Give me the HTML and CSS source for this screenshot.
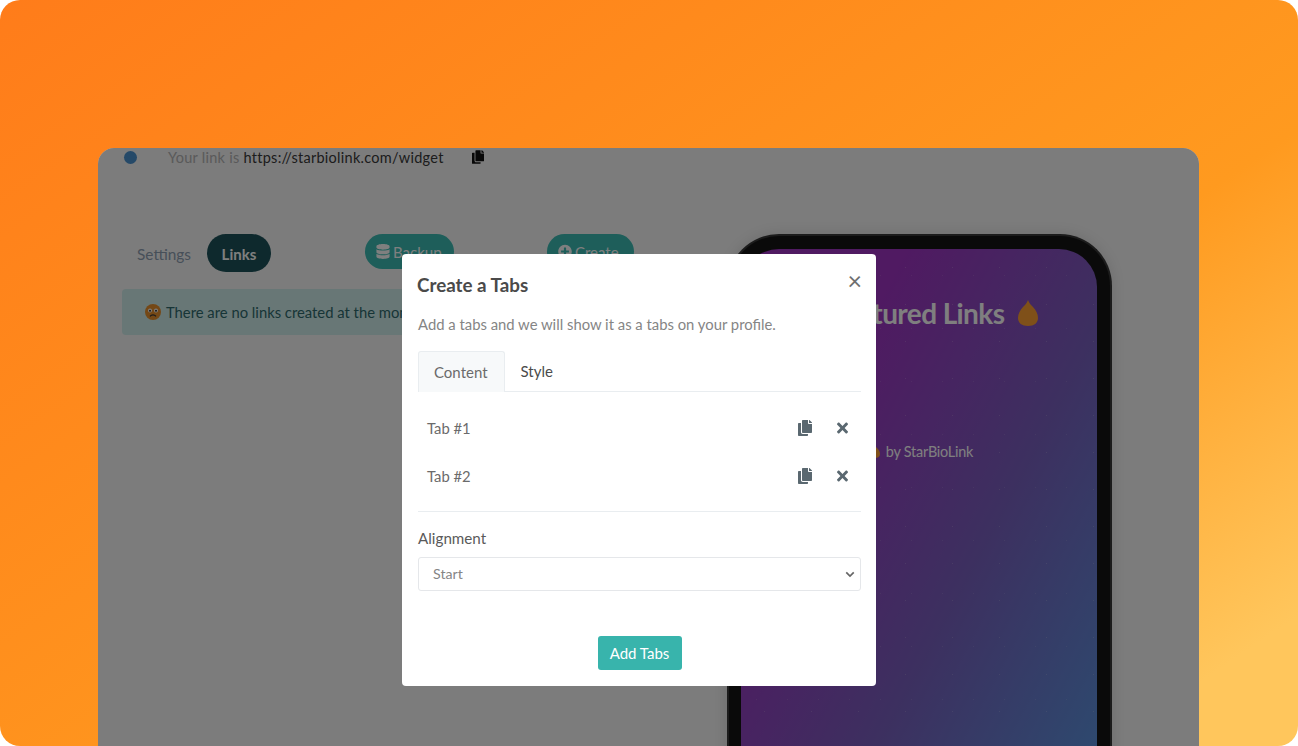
FILE: index.html
```html
<!DOCTYPE html>
<html lang="en">
<head>
    <meta charset="UTF-8">
    <meta name="viewport" content="width=device-width, initial-scale=1.0">
    <title>Create a Tabs</title>
    <link rel="stylesheet" href="styles.css">
</head>
<body>
    <div class="hero">
        <div class="app">
            <div class="link-bar">
                <span class="status-dot"></span>
                <span class="link-text">Your link is <span class="link-url">https://starbiolink.com/widget</span></span>
                <svg class="link-copy" viewBox="0 0 448 512"><path d="M320 448v40c0 13.255-10.745 24-24 24H24c-13.255 0-24-10.745-24-24V120c0-13.255 10.745-24 24-24h72v296c0 30.879 25.121 56 56 56h168zm0-344V0H152c-13.255 0-24 10.745-24 24v368c0 13.255 10.745 24 24 24h272c13.255 0 24-10.745 24-24V128H344c-13.2 0-24-10.8-24-24zm120.971-31.029L375.029 7.029A24 24 0 0 0 358.059 0H352v96h96v-6.059a24 24 0 0 0-7.029-16.97z"/></svg>
            </div>

            <div class="workspace">
                <div class="main-col">
                    <div class="toolbar">
                        <span class="nav-link">Settings</span>
                        <span class="nav-link nav-active">Links</span>
                        <span class="pill pill-backup">
                            <svg class="pill-icon" viewBox="0 0 448 512"><path d="M448 73.143v45.714C448 159.143 347.667 192 224 192S0 159.143 0 118.857V73.143C0 32.857 100.333 0 224 0s224 32.857 224 73.143zM448 176v102.857C448 319.143 347.667 352 224 352S0 319.143 0 278.857V176c48.125 33.143 136.208 48.572 224 48.572S399.874 209.143 448 176zm0 160v102.857C448 479.143 347.667 512 224 512S0 479.143 0 438.857V336c48.125 33.143 136.208 48.572 224 48.572S399.874 369.143 448 336z"/></svg>
                            Backup
                        </span>
                        <span class="pill pill-create">
                            <svg class="pill-icon" viewBox="0 0 512 512"><path d="M256 8C119 8 8 119 8 256s111 248 248 248 248-111 248-248S393 8 256 8zm144 276c0 6.6-5.4 12-12 12h-92v92c0 6.6-5.4 12-12 12h-56c-6.6 0-12-5.4-12-12v-92h-92c-6.6 0-12-5.4-12-12v-56c0-6.6 5.4-12 12-12h92v-92c0-6.6 5.4-12 12-12h56c6.6 0 12 5.4 12 12v92h92c6.6 0 12 5.4 12 12v56z"/></svg>
                            Create
                        </span>
                    </div>
                    <div class="notice">
                        <svg class="notice-face" viewBox="0 0 16 16">
                            <circle cx="8" cy="8" r="8" fill="#e8902c"/>
                            <circle cx="5" cy="6.6" r="2" fill="#fff"/>
                            <circle cx="11" cy="6.6" r="2" fill="#fff"/>
                            <circle cx="5" cy="6.8" r="1" fill="#333"/>
                            <circle cx="11" cy="6.8" r="1" fill="#333"/>
                            <path d="M5 12.4c1.6-2 4.4-2 6 0" fill="none" stroke="#333" stroke-width="1.2"/>
                        </svg>
                        There are no links created at the moment.
                    </div>
                </div>

                <div class="phone">
                    <div class="phone-screen">
                        <div class="phone-title">
                            <span>Featured Links</span>
                            <svg class="flame" viewBox="0 0 20 26"><path d="M10 0c1 3 3 5 5 7 3 3 5 7 5 11 0 5-4 8-10 8S0 23 0 18c0-4 2-8 5-11 2-2 4-4 5-7z"/></svg>
                        </div>
                        <div class="phone-credit">
                            <svg class="flame-small" viewBox="0 0 20 26"><path d="M10 0c1 3 3 5 5 7 3 3 5 7 5 11 0 5-4 8-10 8S0 23 0 18c0-4 2-8 5-11 2-2 4-4 5-7z"/></svg>
                            by StarBioLink
                        </div>
                    </div>
                </div>
            </div>

            <div class="backdrop">
                <div class="modal">
                    <div class="modal-head">
                        <h1>Create a Tabs</h1>
                        <span class="modal-close">&times;</span>
                    </div>
                    <p class="modal-desc">Add a tabs and we will show it as a tabs on your profile.</p>

                    <div class="tabs">
                        <span class="tab tab-active">Content</span>
                        <span class="tab">Style</span>
                    </div>

                    <div class="tab-row">
                        <span class="tab-name">Tab #1</span>
                        <svg class="row-icon row-copy" viewBox="0 0 448 512"><path d="M320 448v40c0 13.255-10.745 24-24 24H24c-13.255 0-24-10.745-24-24V120c0-13.255 10.745-24 24-24h72v296c0 30.879 25.121 56 56 56h168zm0-344V0H152c-13.255 0-24 10.745-24 24v368c0 13.255 10.745 24 24 24h272c13.255 0 24-10.745 24-24V128H344c-13.2 0-24-10.8-24-24zm120.971-31.029L375.029 7.029A24 24 0 0 0 358.059 0H352v96h96v-6.059a24 24 0 0 0-7.029-16.97z"/></svg>
                        <svg class="row-icon row-remove" viewBox="0 0 352 512"><path d="M242.72 256l100.07-100.07c12.28-12.28 12.28-32.19 0-44.48l-22.24-22.24c-12.28-12.28-32.19-12.28-44.48 0L176 189.28 75.93 89.21c-12.28-12.28-32.19-12.28-44.48 0L9.21 111.45c-12.28 12.28-12.28 32.19 0 44.48L109.28 256 9.21 356.07c-12.28 12.28-12.28 32.19 0 44.48l22.24 22.24c12.28 12.28 32.2 12.28 44.48 0L176 322.72l100.07 100.07c12.28 12.28 32.2 12.28 44.48 0l22.24-22.24c12.28-12.28 12.28-32.19 0-44.48L242.72 256z"/></svg>
                    </div>
                    <div class="tab-row">
                        <span class="tab-name">Tab #2</span>
                        <svg class="row-icon row-copy" viewBox="0 0 448 512"><path d="M320 448v40c0 13.255-10.745 24-24 24H24c-13.255 0-24-10.745-24-24V120c0-13.255 10.745-24 24-24h72v296c0 30.879 25.121 56 56 56h168zm0-344V0H152c-13.255 0-24 10.745-24 24v368c0 13.255 10.745 24 24 24h272c13.255 0 24-10.745 24-24V128H344c-13.2 0-24-10.8-24-24zm120.971-31.029L375.029 7.029A24 24 0 0 0 358.059 0H352v96h96v-6.059a24 24 0 0 0-7.029-16.97z"/></svg>
                        <svg class="row-icon row-remove" viewBox="0 0 352 512"><path d="M242.72 256l100.07-100.07c12.28-12.28 12.28-32.19 0-44.48l-22.24-22.24c-12.28-12.28-32.19-12.28-44.48 0L176 189.28 75.93 89.21c-12.28-12.28-32.19-12.28-44.48 0L9.21 111.45c-12.28 12.28-12.28 32.19 0 44.48L109.28 256 9.21 356.07c-12.28 12.28-12.28 32.19 0 44.48l22.24 22.24c12.28 12.28 32.2 12.28 44.48 0L176 322.72l100.07 100.07c12.28 12.28 32.2 12.28 44.48 0l22.24-22.24c12.28-12.28 12.28-32.19 0-44.48L242.72 256z"/></svg>
                    </div>

                    <hr class="divider">

                    <label class="field-label" for="alignment">Alignment</label>
                    <div class="select-box" id="alignment">
                        <span>Start</span>
                        <svg class="select-arrow" viewBox="0 0 12 8"><path d="M1.5 1.5L6 6l4.5-4.5" fill="none" stroke="#666" stroke-width="2"/></svg>
                    </div>

                    <div class="modal-foot">
                        <button type="button" class="add-btn">Add Tabs</button>
                    </div>
                </div>
            </div>
        </div>
    </div>
</body>
</html>
```

FILE: styles.css
```css
* {
    box-sizing: border-box;
}

body {
    margin: 0;
    background-color: white;
    font-family: Lato, "Open Sans", sans-serif;
}

.hero {
    height: 746px;
    padding: 148px 99px 0 98px;
    overflow: hidden;
    border-radius: 20px;
    background: linear-gradient(146deg, #ff7c1a 0%, #ff8a1c 30%, #ff9a1f 62%, #ffc65c 92%);
}

.app {
    position: relative;
    height: 598px;
    border-radius: 16px 16px 0 0;
    overflow: hidden;
    background-color: #f8f8f8;
}

.link-bar {
    display: flex;
    align-items: center;
    height: 18px;
    padding-left: 26px;
    font-size: 14.5px;
    letter-spacing: 0.27px;
}

.status-dot {
    width: 13px;
    height: 13px;
    border-radius: 50%;
    background-color: #4a92d0;
}

.link-text {
    margin-left: 31px;
    color: #b4b4b4;
}

.link-url {
    color: #3a3a3a;
}

.link-copy {
    width: 12px;
    height: 14px;
    margin-left: 28px;
    fill: #111;
}

.workspace {
    display: flex;
    justify-content: space-between;
    padding: 68px 87px 0 24px;
}

.main-col {
    width: 578px;
}

.toolbar {
    display: flex;
    align-items: flex-start;
    height: 38px;
    font-size: 15px;
}

.nav-link {
    padding: 11px 16px 0 15px;
    color: #8f9fb2;
    font-size: 15.4px;
}

.nav-active {
    width: 64px;
    height: 38px;
    padding: 11px 0 0;
    border-radius: 19px;
    background-color: #1d535b;
    color: white;
    font-size: 15px;
    font-weight: 700;
    text-align: center;
}

.pill {
    display: flex;
    align-items: center;
    gap: 3px;
    width: 89px;
    height: 35px;
    padding: 0 0 0 11px;
    border-radius: 18px;
    background-color: #3cbcb4;
    color: white;
}

.pill-backup {
    margin-left: 94px;
}

.pill-create {
    width: 87px;
    margin-left: 93px;
}

.pill-icon {
    width: 14px;
    height: 15px;
    fill: white;
}

.notice {
    display: flex;
    align-items: center;
    gap: 5px;
    height: 46px;
    margin-top: 17px;
    padding-left: 23px;
    border-radius: 4px;
    background-color: #d0eeec;
    color: #2f6b6e;
    font-size: 14.8px;
}

.notice-face {
    width: 16px;
    height: 16px;
}

.phone {
    width: 385px;
    height: 560px;
    padding: 13px 13px 13px 12px;
    border: 2px solid #383838;
    border-bottom: 0;
    border-radius: 52px 52px 0 0;
    background-color: #151515;
    box-shadow: 0 0 14px rgba(0, 0, 0, 0.12);
}

.phone-screen {
    height: 100%;
    padding-top: 47px;
    border-radius: 38px 38px 0 0;
    background-color: #a034c4;
    background-image:
        radial-gradient(circle, rgba(255, 255, 255, 0.18) 0.6px, transparent 1px),
        radial-gradient(circle, rgba(255, 255, 255, 0.12) 0.6px, transparent 1px),
        linear-gradient(118deg, #a034c4 0%, #a034c4 26%, #7a60c0 62%, #5a96e0 100%);
    background-size: 47px 37px, 31px 53px, 100% 100%;
    color: white;
}

.phone-title {
    display: flex;
    align-items: center;
    justify-content: center;
    gap: 14px;
    padding-left: 31px;
    font-size: 28px;
    font-weight: 700;
    letter-spacing: -0.6px;
}

.flame {
    width: 20px;
    height: 26px;
    fill: #ffa033;
}

.phone-credit {
    display: flex;
    align-items: center;
    justify-content: center;
    gap: 6px;
    margin-top: 113px;
    padding-left: 5px;
    font-size: 14.4px;
    letter-spacing: -0.2px;
}

.flame-small {
    width: 10px;
    height: 13px;
    fill: #ffa033;
}

.backdrop {
    position: absolute;
    top: 0;
    right: 0;
    bottom: 0;
    left: 0;
    padding: 106px 0 0 304px;
    background-color: rgba(0, 0, 0, 0.5);
}

.modal {
    display: flex;
    flex-direction: column;
    width: 474px;
    height: 432px;
    padding: 0 15px;
    border-radius: 4px;
    background-color: white;
    color: #4b4b4b;
}

.modal-head {
    display: flex;
    align-items: center;
    justify-content: space-between;
    height: 60px;
}

.modal-head h1 {
    margin: 0;
    font-size: 18.8px;
    font-weight: 700;
    color: #4a4a4a;
}

.modal-close {
    margin: -7px -1px 0 0;
    font-size: 25px;
    line-height: 1;
    color: #6f6f6f;
}

.modal-desc {
    margin: 1px 0 0 1px;
    font-size: 14.83px;
    line-height: 18px;
    color: #858585;
}

.tabs {
    display: flex;
    height: 41px;
    margin: 18px 0 12px 1px;
    border-bottom: 1px solid #e9edf0;
    font-size: 15px;
}

.tab {
    padding: 11px 16px 0;
    color: #4b4b4b;
}

.tab-active {
    height: 41px;
    padding-left: 15px;
    border: 1px solid #e9edf0;
    border-bottom: 0;
    border-radius: 3px 3px 0 0;
    background-color: #f7f9fa;
    color: #6b6b6b;
}

.tab-row {
    display: flex;
    align-items: center;
    height: 48px;
    padding-left: 10px;
    font-size: 14.8px;
    color: #6b6b6b;
}

.tab-name {
    flex: 1;
}

.row-icon {
    fill: #5a6870;
}

.row-copy {
    width: 14px;
    height: 16px;
}

.row-remove {
    width: 11px;
    height: 16px;
    margin: 0 13px 0 25px;
}

.divider {
    width: 443px;
    margin: 11px 0 0 1px;
    border: 0;
    border-top: 1px solid #e9edf0;
}

.field-label {
    margin: 17px 0 0 1px;
    font-size: 15.2px;
    line-height: 18px;
    color: #5a5a5a;
}

.select-box {
    display: flex;
    align-items: center;
    justify-content: space-between;
    width: 443px;
    height: 34px;
    margin: 10px 0 0 1px;
    padding: 0 5px 2px 14px;
    border: 1px solid #e5e7ea;
    border-radius: 3px;
    font-size: 14.2px;
    color: #858585;
}

.select-arrow {
    width: 10px;
    height: 7px;
    margin-top: 2px;
}

.modal-foot {
    display: flex;
    justify-content: center;
    margin-top: 45px;
    padding-left: 1px;
}

.add-btn {
    width: 84px;
    height: 34px;
    padding: 0;
    border: none;
    border-radius: 3px;
    background-color: #38b4ac;
    color: white;
    font-family: inherit;
    font-size: 15px;
}
```
